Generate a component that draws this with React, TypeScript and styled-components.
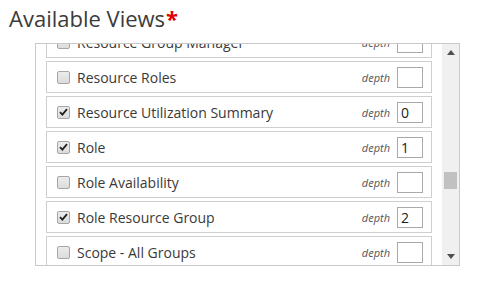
import React, { useLayoutEffect, useRef } from 'react';
import styled, { createGlobalStyle } from 'styled-components';

const GlobalStyle = createGlobalStyle`
    body {
        margin: 0;
        background: #fff;
        font-family: "Open Sans", "Liberation Sans", sans-serif;
    }
`

type View = { name: string; checked: boolean; depth: string };

const views: View[] = [
    { name: 'Resource Group Manager', checked: false, depth: '' },
    { name: 'Resource Roles', checked: false, depth: '' },
    { name: 'Resource Utilization Summary', checked: true, depth: '0' },
    { name: 'Role', checked: true, depth: '1' },
    { name: 'Role Availability', checked: false, depth: '' },
    { name: 'Role Resource Group', checked: true, depth: '2' },
    { name: 'Scope - All Groups', checked: false, depth: '' },
];

export default function App() {
    const listRef = useRef<HTMLDivElement>(null);

    // the list is scrolled a little, so the first row shows only its bottom
    useLayoutEffect(() => {
        if (listRef.current) listRef.current.scrollTop = 22;
    }, []);

    return (
        <Page>
            <GlobalStyle/>
            <Title>
                Available Views<Required>*</Required>
            </Title>

            <Box>
                <List ref={listRef}>
                    {views.map(v => (
                        <Row key={v.name}>
                            <Check>
                                {v.checked && (
                                    <svg width="9" height="8" viewBox="0 0 9 8">
                                        <path d="M1 4.2 L3.4 6.6 L8 1.2" fill="none" stroke="#222" strokeWidth="1.8"/>
                                    </svg>
                                )}
                            </Check>
                            <Label>{v.name}</Label>
                            <DepthLabel>depth</DepthLabel>
                            <DepthInput value={v.depth} readOnly/>
                        </Row>
                    ))}
                </List>

                <Scrollbar>
                    <ArrowButton>
                        <svg width="8" height="5" viewBox="0 0 8 5"><path d="M0 5 L4 0 L8 5 Z" fill="#505050"/></svg>
                    </ArrowButton>
                    <Track>
                        <Thumb/>
                    </Track>
                    <ArrowButton>
                        <svg width="8" height="5" viewBox="0 0 8 5"><path d="M0 0 L8 0 L4 5 Z" fill="#505050"/></svg>
                    </ArrowButton>
                </Scrollbar>
            </Box>
        </Page>
    );
}

const Page = styled.div`
    width: 480px;
    height: 295px;
    padding: 3px 0 0 35px;
    box-sizing: border-box;
`
const Title = styled.h2`
    margin: 0 0 10px -26px;
    font-size: 22px;
    font-weight: 400;
    line-height: 30px;
    color: #3b3b3b;
`
const Required = styled.span`
    color: #e00000;
    font-weight: 700;
    margin-left: 1px;
`
const Box = styled.div`
    display: flex;
    width: 425px;
    height: 223px;
    border: 1px solid #c8c8c8;
    box-sizing: border-box;
`
const List = styled.div`
    flex: 1;
    overflow: hidden;
    display: flex;
    flex-direction: column;
    gap: 3px;
    padding: 4px 10px;
`
const Row = styled.div`
    flex: none;
    display: flex;
    align-items: center;
    height: 32px;
    box-sizing: border-box;
    border: 1px solid #cfcfcf;
    padding: 0 8px 0 10px;
`
const Check = styled.span`
    flex: none;
    display: flex;
    align-items: center;
    justify-content: center;
    width: 13px;
    height: 13px;
    box-sizing: border-box;
    border: 1px solid #a6a6a6;
    border-radius: 2px;
    background: linear-gradient(#ececec, #dcdcdc);
    margin-right: 7px;
`
const Label = styled.span`
    flex: 1;
    font-size: 14px;
    color: #3a3a3a;
    white-space: nowrap;
`
const DepthLabel = styled.span`
    font-size: 11px;
    font-style: italic;
    color: #555;
    margin-right: 7px;
`
const DepthInput = styled.input`
    width: 26px;
    height: 21px;
    box-sizing: border-box;
    border: 1px solid #a9a9a9;
    padding: 0 3px;
    font-family: "Open Sans", "Liberation Sans", sans-serif;
    font-size: 14px;
    color: #222;
    outline: none;
`
const Scrollbar = styled.div`
    flex: none;
    width: 17px;
    display: flex;
    flex-direction: column;
    background: #f0f0f0;
`
const ArrowButton = styled.div`
    height: 17px;
    display: flex;
    align-items: center;
    justify-content: center;
`
const Track = styled.div`
    flex: 1;
    padding-top: 111px;
`
const Thumb = styled.div`
    width: 13px;
    height: 17px;
    margin: 0 2px;
    background: #c1c1c1;
`
